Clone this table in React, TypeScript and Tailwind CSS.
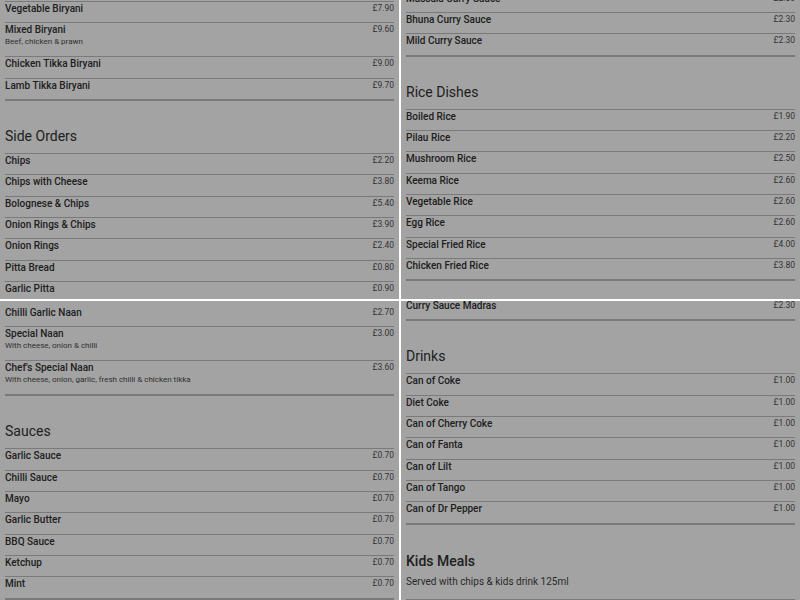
type Item = { name: string; price: string; desc?: string };
type Section = { title?: string; items?: Item[]; note?: string; bold?: boolean; bare?: boolean };

const allAt = (names: string[], price: string): Item[] => names.map((name) => ({ name, price }));

const topLeft: Section[] = [
  {
    items: [
      { name: 'Vegetable Biryani', price: '£7.90' },
      { name: 'Mixed Biryani', price: '£9.60', desc: 'Beef, chicken & prawn' },
      { name: 'Chicken Tikka Biryani', price: '£9.00' },
      { name: 'Lamb Tikka Biryani', price: '£9.70' },
    ],
  },
  {
    title: 'Side Orders',
    items: [
      { name: 'Chips', price: '£2.20' },
      { name: 'Chips with Cheese', price: '£3.80' },
      { name: 'Bolognese & Chips', price: '£5.40' },
      { name: 'Onion Rings & Chips', price: '£3.90' },
      { name: 'Onion Rings', price: '£2.40' },
      { name: 'Pitta Bread', price: '£0.80' },
      { name: 'Garlic Pitta', price: '£0.90' },
    ],
  },
];

const topRight: Section[] = [
  { items: allAt(['Massala Curry Sauce', 'Bhuna Curry Sauce', 'Mild Curry Sauce'], '£2.30') },
  {
    title: 'Rice Dishes',
    items: [
      { name: 'Boiled Rice', price: '£1.90' },
      { name: 'Pilau Rice', price: '£2.20' },
      { name: 'Mushroom Rice', price: '£2.50' },
      { name: 'Keema Rice', price: '£2.60' },
      { name: 'Vegetable Rice', price: '£2.60' },
      { name: 'Egg Rice', price: '£2.60' },
      { name: 'Special Fried Rice', price: '£4.00' },
      { name: 'Chicken Fried Rice', price: '£3.80' },
    ],
  },
];

const bottomLeft: Section[] = [
  {
    bare: true,
    items: [
      { name: 'Chilli Garlic Naan', price: '£2.70' },
      { name: 'Special Naan', price: '£3.00', desc: 'With cheese, onion & chilli' },
      { name: "Chef's Special Naan", price: '£3.60', desc: 'With cheese, onion, garlic, fresh chilli & chicken tikka' },
    ],
  },
  {
    title: 'Sauces',
    items: allAt(['Garlic Sauce', 'Chilli Sauce', 'Mayo', 'Garlic Butter', 'BBQ Sauce', 'Ketchup', 'Mint'], '£0.70'),
  },
];

const bottomRight: Section[] = [
  { bare: true, items: [{ name: 'Curry Sauce Madras', price: '£2.30' }] },
  {
    title: 'Drinks',
    items: allAt(
      ['Can of Coke', 'Diet Coke', 'Can of Cherry Coke', 'Can of Fanta', 'Can of Lilt', 'Can of Tango', 'Can of Dr Pepper'],
      '£1.00'
    ),
  },
  { title: 'Kids Meals', note: 'Served with chips & kids drink 125ml', bold: true },
];

function Row({ item, bare }: { item: Item; bare?: boolean }) {
  return (
    <div
      className={`flex justify-between border-t ${bare ? 'border-transparent' : 'border-[#7a7a7a]'} ${item.desc ? 'h-[34px]' : 'h-[21.33px]'}`}
    >
      <div>
        <div className="text-[10px] font-medium leading-[13px] text-[#202020]">{item.name}</div>
        {item.desc && <div className="text-[8px] leading-[11px] text-[#303030]">{item.desc}</div>}
      </div>
      <div className="text-[8.5px] leading-[13px] text-[#333]">{item.price}</div>
    </div>
  );
}

function MenuSection({ section }: { section: Section }) {
  return (
    <div>
      {section.title && (
        <h2
          className={`text-[14px] leading-[20px] text-[#202020] ${section.bold ? 'mt-[26px] font-medium' : 'mt-[25px] pb-[7px]'}`}
        >
          {section.title}
        </h2>
      )}
      {section.items && (
        <div className="border-b-2 border-[#7a7a7a]">
          {section.items.map((it, i) => (
            <Row key={it.name} item={it} bare={section.bare && i === 0} />
          ))}
        </div>
      )}
      {section.note && (
        <div className="mt-[4px] pb-[10px] text-[10px] leading-[14px] text-[#2a2a2a] border-b-2 border-[#7a7a7a]">
          {section.note}
        </div>
      )}
    </div>
  );
}

function Panel({ sections, offset }: { sections: Section[]; offset: string }) {
  return (
    <div className="overflow-hidden bg-[#a3a3a3] px-[5px]">
      <div className={offset}>
        {sections.map((s, i) => (
          <MenuSection key={i} section={s} />
        ))}
      </div>
    </div>
  );
}

export default function App() {
  return (
    <div className="w-[800px] h-[600px] bg-white grid grid-cols-[399px_399px] grid-rows-[299px_299px] gap-[2px] font-['Roboto',sans-serif]">
      <Panel sections={topLeft} offset="mt-[1px]" />
      <Panel sections={topRight} offset="-mt-[9.33px]" />
      <Panel sections={bottomLeft} offset="mt-[4px]" />
      <Panel sections={bottomRight} offset="-mt-[3px]" />
    </div>
  );
}
